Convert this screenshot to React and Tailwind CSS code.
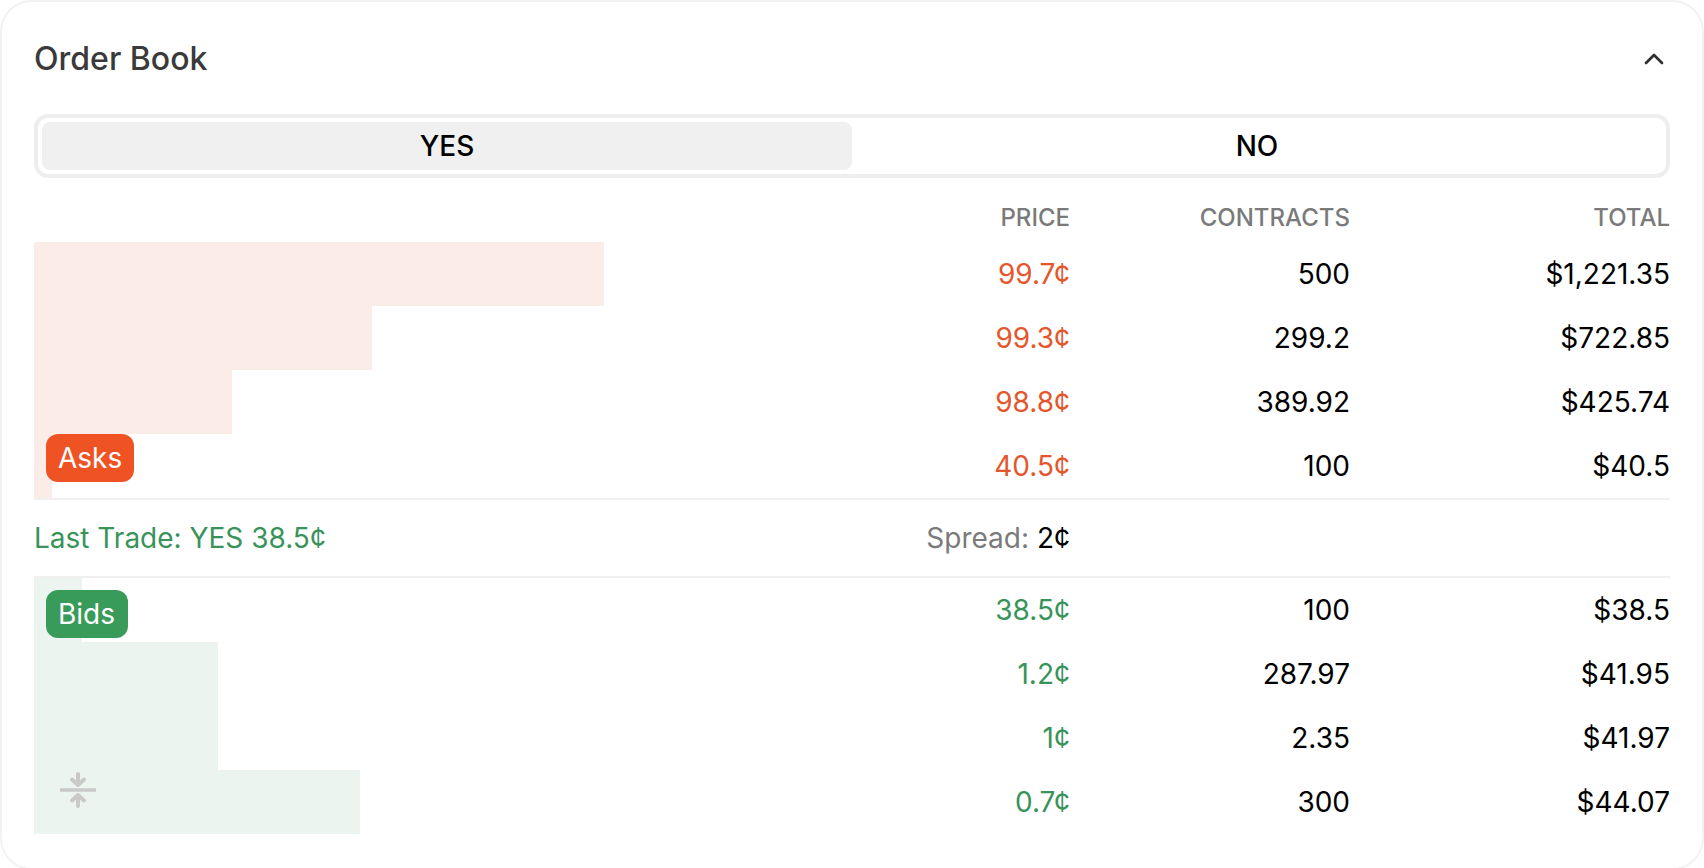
import React from "react";

const asks = [
  { p: "99.7¢", c: "500", t: "$1,221.35", w: 570 },
  { p: "99.3¢", c: "299.2", t: "$722.85", w: 338 },
  { p: "98.8¢", c: "389.92", t: "$425.74", w: 198 },
  { p: "40.5¢", c: "100", t: "$40.5", w: 18 },
];
const bids = [
  { p: "38.5¢", c: "100", t: "$38.5", w: 48 },
  { p: "1.2¢", c: "287.97", t: "$41.95", w: 184 },
  { p: "1¢", c: "2.35", t: "$41.97", w: 184 },
  { p: "0.7¢", c: "300", t: "$44.07", w: 326 },
];

function Row({ r, bar, color }) {
  return (
    <div className="relative grid grid-cols-[1036px_280px_320px] h-16 items-center text-[28px] text-right">
      <div className={`absolute left-0 top-0 bottom-0 ${bar}`} style={{ width: r.w }} />
      <div className={`relative ${color}`}>{r.p}</div>
      <div className="relative text-black">{r.c}</div>
      <div className="relative text-black">{r.t}</div>
    </div>
  );
}

export default function App() {
  return (
    <div className="w-[1704px] h-[868px] bg-white font-['Inter',sans-serif] overflow-hidden">
      <div className="relative h-[870px] border-2 border-[#f2f2f2] rounded-[32px] px-8 pt-[30px]">
        <div className="flex items-center justify-between h-[54px]">
          <h2 className="text-[32px] font-[450] text-[#3a3a3a]">Order Book</h2>
          <svg width="32" height="32" viewBox="0 0 24 24" fill="none" stroke="#2f2f2f" strokeWidth="2" strokeLinecap="round" strokeLinejoin="round">
            <path d="M6 15l6-6 6 6" />
          </svg>
        </div>
        <div className="mt-[28px] flex h-[64px] border-4 border-[#eeeeee] rounded-[14px] p-1 text-[28px] font-[450] text-black">
          <div className="flex-1 flex items-center justify-center bg-[#f0f0f0] rounded-lg">YES</div>
          <div className="flex-1 flex items-center justify-center">NO</div>
        </div>
        <div className="grid grid-cols-[1036px_280px_320px] h-[64px] pt-4 items-center text-right text-[24px] font-medium text-[#7a7a7a]">
          <div>PRICE</div>
          <div>CONTRACTS</div>
          <div>TOTAL</div>
        </div>
        <div className="relative">
          {asks.map((r) => (
            <Row key={r.p} r={r} bar="bg-[#fcece7]" color="text-[#e5562c]" />
          ))}
          <span className="absolute left-3 bottom-4 h-12 flex items-center px-3 rounded-xl bg-[#ef5324] text-white text-[28px]">Asks</span>
        </div>
        <div className="grid grid-cols-[1036px_600px] h-[80px] items-center border-y-2 border-[#f0f0f0] text-[28px]">
          <div className="relative">
            <span className="text-[#38935b]">Last Trade: YES 38.5¢</span>
            <span className="absolute right-0 text-[#7a7a7a]">
              Spread: <span className="text-black">2¢</span>
            </span>
          </div>
        </div>
        <div className="relative">
          {bids.map((r) => (
            <Row key={r.p} r={r} bar="bg-[#ebf4ee]" color="text-[#38935b]" />
          ))}
          <span className="absolute left-3 top-3 h-12 flex items-center pl-3 pr-[13px] rounded-xl bg-[#399b59] text-white text-[28px]">Bids</span>
          <svg className="absolute left-[26px] bottom-[26px]" width="36" height="36" viewBox="0 0 36 36" fill="none" stroke="#c9c9c9" strokeLinecap="round" strokeLinejoin="round">
            <path d="M1 18h34" strokeWidth="3.5" />
            <path d="M18 2v9M12 7.500l6 5.500 6-5.500" strokeWidth="4" />
            <path d="M18 34v-9M12 28.500l6-5.500 6 5.500" strokeWidth="4" />
          </svg>
        </div>
      </div>
    </div>
  );
}
